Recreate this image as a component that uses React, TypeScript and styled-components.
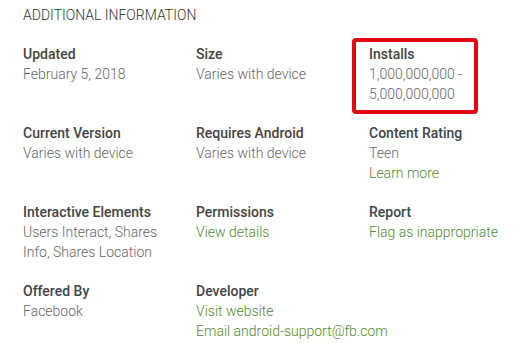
import React from "react";
import styled, { createGlobalStyle } from "styled-components";

const GlobalStyle = createGlobalStyle`
  body {
    margin: 0;
    background: #ffffff;
    font-family: Roboto, "Liberation Sans", Arial, sans-serif;
  }
`;

type Item = {
  label: string;
  values: string[];
  links?: string[];
  highlight?: boolean;
};

const items: Item[] = [
  { label: "Updated", values: ["February 5, 2018"] },
  { label: "Size", values: ["Varies with device"] },
  { label: "Installs", values: ["1,000,000,000 -", "5,000,000,000"], highlight: true },
  { label: "Current Version", values: ["Varies with device"] },
  { label: "Requires Android", values: ["Varies with device"] },
  { label: "Content Rating", values: ["Teen"], links: ["Learn more"] },
  { label: "Interactive Elements", values: ["Users Interact, Shares", "Info, Shares Location"] },
  { label: "Permissions", values: [], links: ["View details"] },
  { label: "Report", values: [], links: ["Flag as inappropriate"] },
  { label: "Offered By", values: ["Facebook"] },
  { label: "Developer", values: [], links: ["Visit website", "Email android-support@fb.com"] },
];

function App(): JSX.Element {
  return (
    <Container>
      <GlobalStyle />
      <Heading>Additional Information</Heading>
      <Grid>
        {items.map((item) => (
          <Cell key={item.label}>
            {item.highlight && <Marker />}
            <Label>{item.label}</Label>
            {item.values.map((v) => (
              <Value key={v}>{v}</Value>
            ))}
            {(item.links || []).map((l) => (
              <LinkText key={l}>{l}</LinkText>
            ))}
          </Cell>
        ))}
      </Grid>
    </Container>
  );
}

const Container = styled.div`
  width: 526px;
  height: 343px;
  padding: 5px 0 0 23px;
  box-sizing: border-box;
  overflow: hidden;
`;

const Heading = styled.div`
  font-size: 14px;
  font-weight: 300;
  line-height: 20px;
  text-transform: uppercase;
  color: #333333;
  margin-bottom: 19px;
`;

const Grid = styled.div`
  display: grid;
  grid-template-columns: 173px 173px 173px;
  row-gap: 19px;
`;

const Cell = styled.div`
  position: relative;
  min-height: 60px;
  font-size: 14px;
  line-height: 20px;
  white-space: nowrap;
`;

const Label = styled.div`
  font-weight: 500;
  color: #444444;
`;

const Value = styled.div`
  color: #666666;
  font-weight: 300;
`;

const LinkText = styled.div`
  color: #4f8a33;
  font-weight: 300;
`;

const Marker = styled.div`
  position: absolute;
  left: -17px;
  top: -6px;
  width: 126px;
  height: 76px;
  box-sizing: border-box;
  border: 4px solid #e30613;
  border-radius: 4px;
`;

export default App;
